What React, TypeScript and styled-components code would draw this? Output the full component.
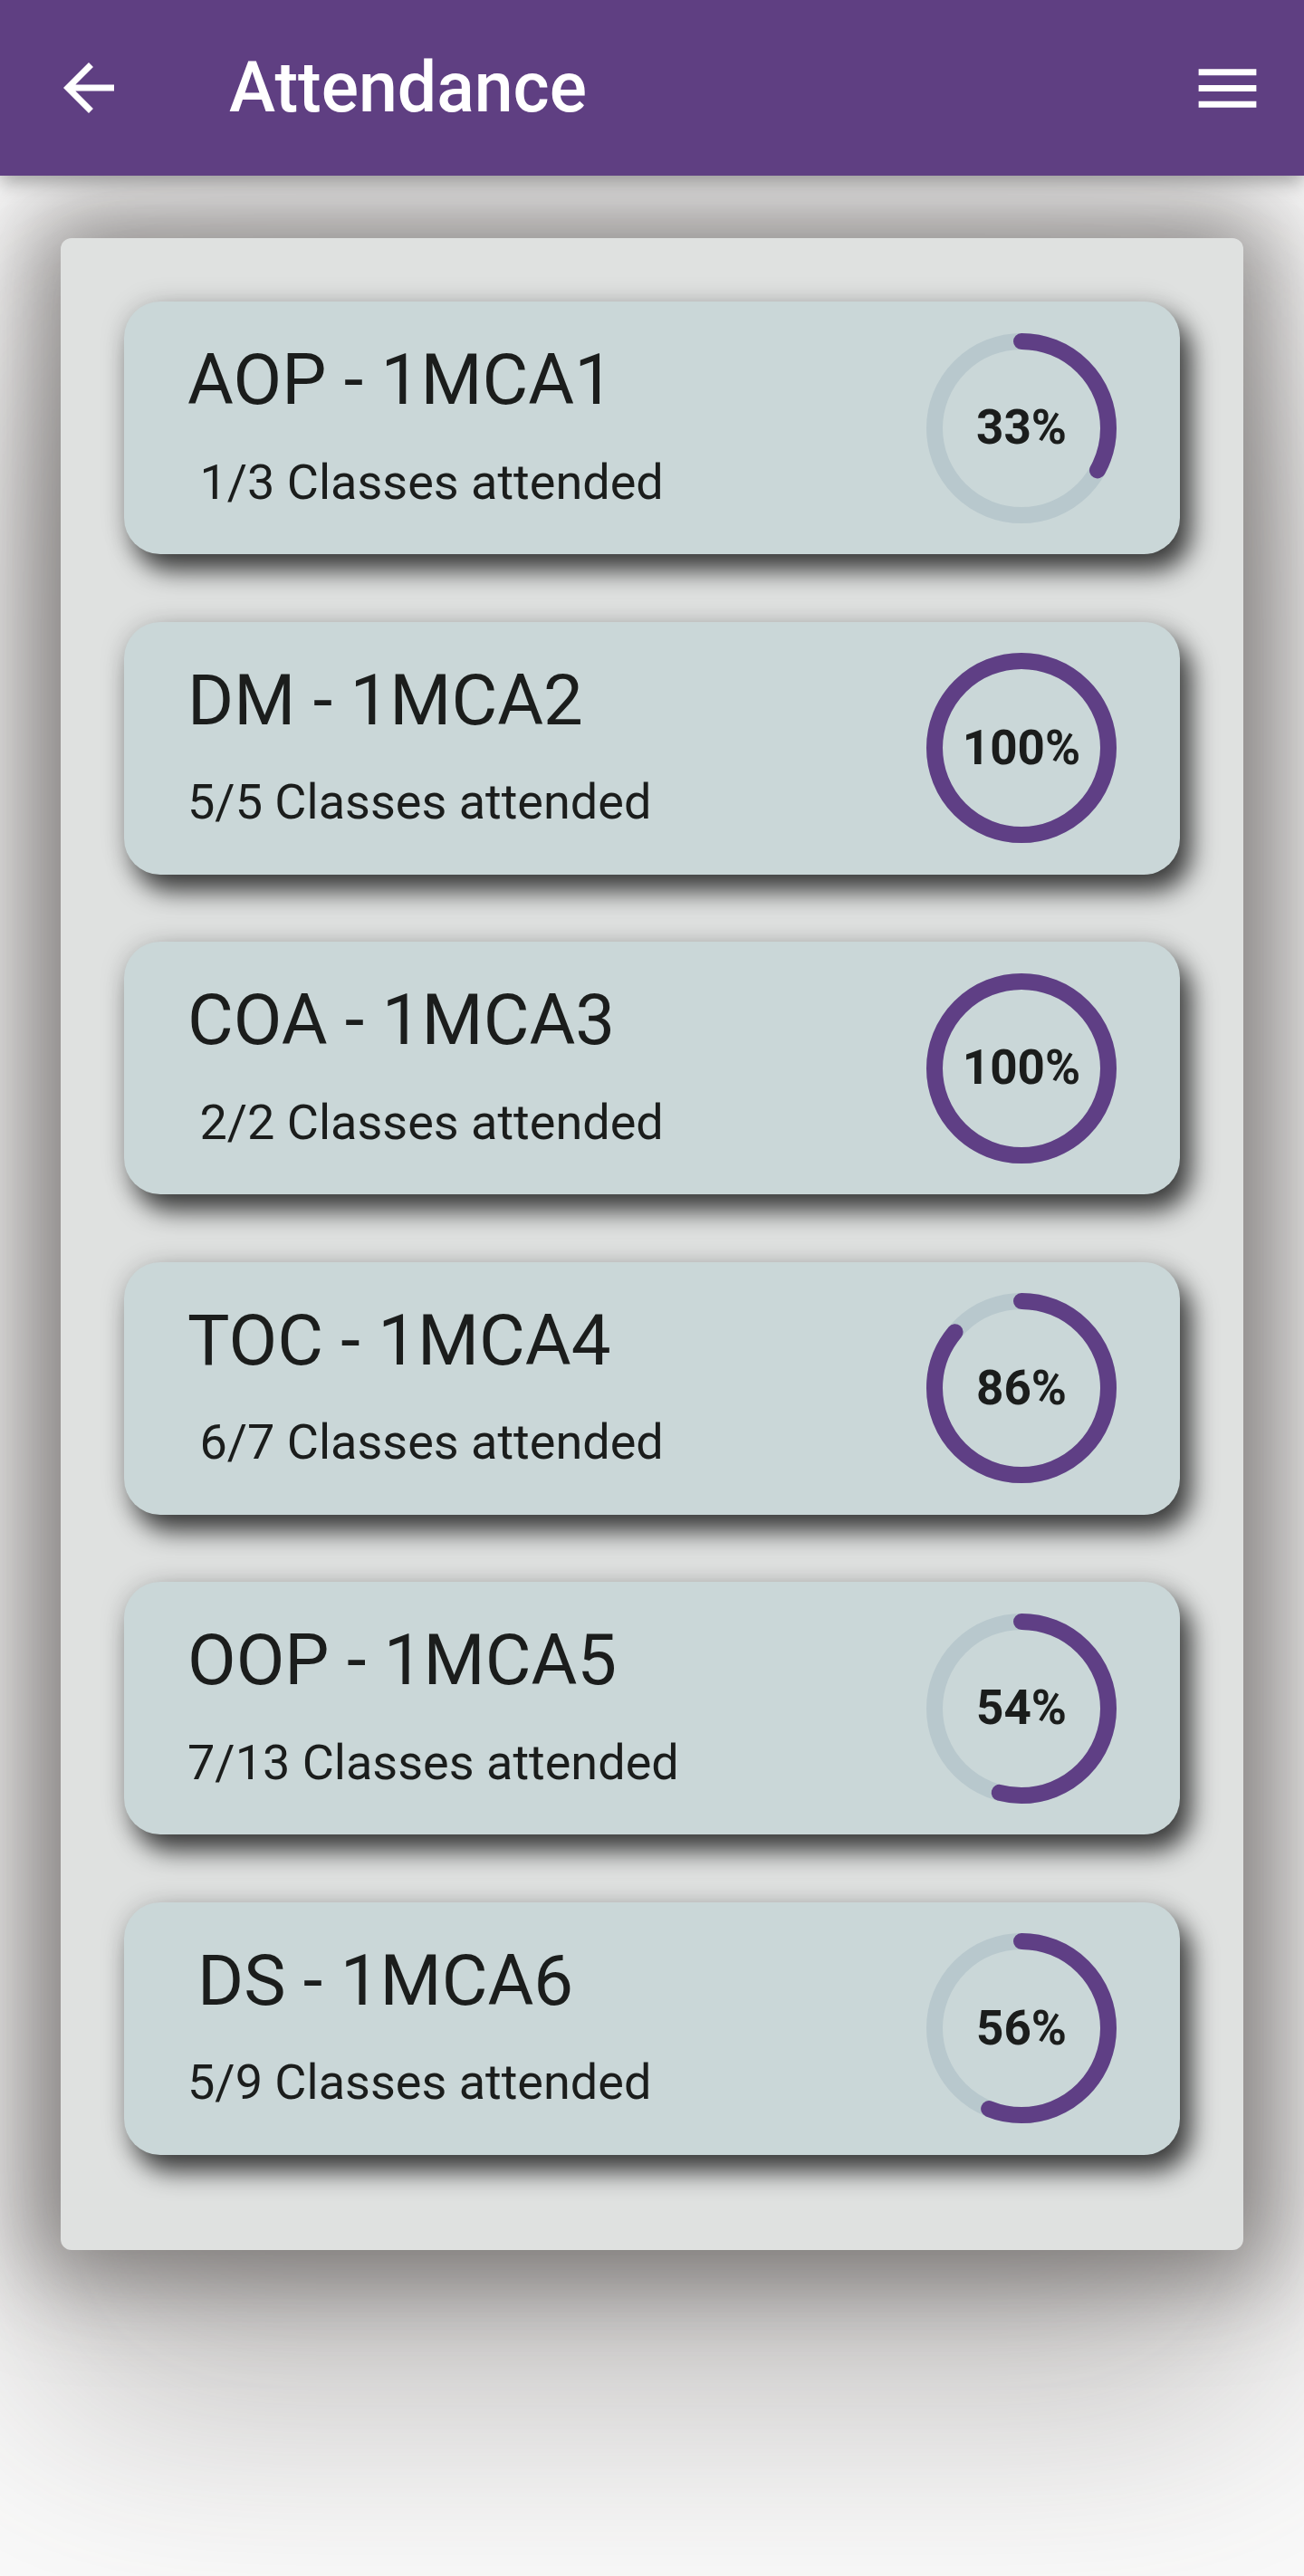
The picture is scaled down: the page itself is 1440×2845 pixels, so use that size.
import React from "react";
import styled, { createGlobalStyle } from "styled-components";

const GlobalStyle = createGlobalStyle`
  html, body {
    margin: 0;
    padding: 0;
    background: #fafafa;
  }
  body {
    font-family: Roboto, "Noto Sans", "Liberation Sans", sans-serif;
    min-height: 2845px;
    overflow: hidden;
  }
  * { box-sizing: border-box; }
`;

const Page = styled.div`
  min-height: 2845px;
  background: #fafafa;
  display: flex;
  flex-direction: column;
`;

const Header = styled.header`
  position: relative;
  z-index: 2;
  height: 194px;
  background: #5f3f82;
  display: flex;
  align-items: center;
  padding: 0 42px 0 56px;
  box-shadow: 0 6px 20px rgba(0, 0, 0, 0.35);
`;

const IconButton = styled.div`
  display: flex;
  align-items: center;
  justify-content: center;
  flex: none;
`;

const Title = styled.h1`
  margin: 0 0 0 113px;
  font-family: Roboto, sans-serif;
  font-weight: 500;
  font-size: 77px;
  line-height: 1;
  color: #ffffff;
  letter-spacing: 0;
`;

const Spacer = styled.div`
  flex: 1;
`;

const Main = styled.main`
  position: relative;
  z-index: 1;
  padding: 69px 67px 0;
`;

const Panel = styled.section`
  background: #dfe1e0;
  border-radius: 12px;
  padding: 70px 70px 105px;
  display: flex;
  flex-direction: column;
  gap: 74.6px;
  box-shadow: 0 0 100px 32px rgba(58, 52, 51, 0.55),
    0 150px 300px 20px rgba(58, 52, 51, 0.3);
`;

const Card = styled.article`
  height: 279px;
  background: #cad7d8;
  border-radius: 40px;
  display: flex;
  justify-content: space-between;
  align-items: center;
  padding: 0 70px;
  box-shadow: 12px 18px 28px rgba(0, 0, 0, 0.72), 0 0 30px rgba(0, 0, 0, 0.14);
`;

const Info = styled.div`
  align-self: flex-start;
  padding-top: 48px;
  display: flex;
  flex-direction: column;
  gap: 46.5px;
  color: #1b1d1c;
`;

const CourseName = styled.div<{ $indent?: number }>`
  font-family: Roboto, sans-serif;
  font-weight: 400;
  font-size: 78px;
  line-height: 1;
  padding-left: ${(p) => p.$indent ?? 0}px;
  white-space: pre;
`;

const Classes = styled.div`
  font-family: Roboto, sans-serif;
  font-weight: 400;
  font-size: 54px;
  line-height: 1;
  white-space: pre;
`;

const Ring = styled.div`
  display: grid;
  width: 210px;
  height: 210px;
  flex: none;
  & > * {
    grid-area: 1 / 1;
  }
`;

const Percent = styled.div`
  display: flex;
  align-items: center;
  justify-content: center;
  font-family: Roboto, sans-serif;
  font-weight: 700;
  font-size: 53px;
  line-height: 1;
  color: #1b1d1c;
`;

const BackArrow = () => (
  <svg width="84" height="84" viewBox="0 0 24 24" fill="#ffffff">
    <path d="M20 11H7.83l5.59-5.59L12 4l-8 8 8 8 1.41-1.41L7.83 13H20v-2z" />
  </svg>
);

const MenuIcon = () => (
  <svg width="85" height="85" viewBox="0 0 24 24" fill="#ffffff">
    <path d="M3 18h18v-2H3v2zm0-5h18v-2H3v2zm0-7v2h18V6H3z" />
  </svg>
);

const Progress: React.FC<{ value: number }> = ({ value }) => {
  const r = 96;
  const c = 2 * Math.PI * r;
  const len = (value / 100) * c;
  return (
    <Ring>
      <svg width="210" height="210" viewBox="0 0 210 210">
        <circle cx="105" cy="105" r={r} fill="none" stroke="#b8c8cd" strokeWidth="18" />
        <circle
          cx="105"
          cy="105"
          r={r}
          fill="none"
          stroke="#5f3f85"
          strokeWidth="18"
          strokeLinecap={value >= 100 ? "butt" : "round"}
          strokeDasharray={`${len} ${c}`}
          transform="rotate(-90 105 105)"
        />
      </svg>
      <Percent>{value}%</Percent>
    </Ring>
  );
};

const courses = [
  { name: "AOP - 1MCA1", classes: " 1/3 Classes attended", pct: 33 },
  { name: "DM - 1MCA2", classes: "5/5 Classes attended", pct: 100 },
  { name: "COA - 1MCA3", classes: " 2/2 Classes attended", pct: 100 },
  { name: "TOC - 1MCA4", classes: " 6/7 Classes attended", pct: 86 },
  { name: "OOP - 1MCA5", classes: "7/13 Classes attended", pct: 54 },
  { name: "DS - 1MCA6", classes: "5/9 Classes attended", pct: 56, indent: 11 },
];

export default function App() {
  return (
    <Page>
      <GlobalStyle />
      <Header>
        <IconButton>
          <BackArrow />
        </IconButton>
        <Title>Attendance</Title>
        <Spacer />
        <IconButton>
          <MenuIcon />
        </IconButton>
      </Header>
      <Main>
        <Panel>
          {courses.map((c) => (
            <Card key={c.name}>
              <Info>
                <CourseName $indent={c.indent}>{c.name}</CourseName>
                <Classes>{c.classes}</Classes>
              </Info>
              <Progress value={c.pct} />
            </Card>
          ))}
        </Panel>
      </Main>
    </Page>
  );
}
